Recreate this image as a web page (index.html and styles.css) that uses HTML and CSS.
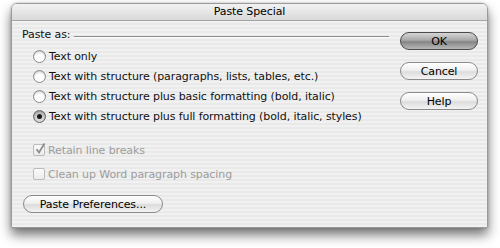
FILE: index.html
```html
<!DOCTYPE html>
<html>
<head>
<meta charset="utf-8">
<link rel="stylesheet" href="styles.css">
</head>
<body>
<div class="window">
  <div class="titlebar">Paste Special</div>
  <div class="content">
    <div class="main">
      <div class="group-head"><span class="label">Paste as:</span><span class="rule"></span></div>
      <div class="options">
        <div class="row"><span class="radio"></span><span>Text only</span></div>
        <div class="row"><span class="radio"></span><span>Text with structure (paragraphs, lists, tables, etc.)</span></div>
        <div class="row"><span class="radio"></span><span>Text with structure plus basic formatting (bold, italic)</span></div>
        <div class="row"><span class="radio on"></span><span>Text with structure plus full formatting (bold, italic, styles)</span></div>
      </div>
      <div class="checks">
        <div class="row dis"><span class="check on"><svg width="12" height="12" viewBox="0 0 12 12"><path d="M2.5 6.2 L5 9.5 L10.5 0.5" fill="none" stroke="#8c8c8c" stroke-width="1.8"/></svg></span><span>Retain line breaks</span></div>
        <div class="row dis"><span class="check"></span><span>Clean up Word paragraph spacing</span></div>
      </div>
      <div class="prefs"><span class="btn wide">Paste Preferences...</span></div>
    </div>
    <div class="side">
      <span class="btn default">OK</span>
      <span class="btn">Cancel</span>
      <span class="btn">Help</span>
    </div>
  </div>
</div>
</body>
</html>
```
FILE: styles.css
```css
html, body { margin: 0; padding: 0; background: #fff; }
body { font-family: "DejaVu Sans", "Lucida Grande", sans-serif; font-size: 11px; letter-spacing: -0.1px; color: #111; width: 500px; height: 248px; overflow: hidden; }
.window {
  margin: 3px 0 0 11px;
  width: 477px;
  height: 225px;
  box-sizing: border-box;
  border: 1px solid #9a9a9a;
  border-radius: 6px 6px 0 0;
  box-shadow: 0 7px 12px rgba(0,0,0,0.55), 0 0 3px rgba(0,0,0,0.2);
  overflow: hidden;
  display: flex; flex-direction: column;
}
.titlebar {
  height: 16px; line-height: 16px;
  text-align: center;
  background: linear-gradient(#f2f2f2, #d9d9d9);
  border-bottom: 1px solid #a5a5a5;
  font-size: 11px; color: #000;
}
.content {
  flex: 1;
  display: flex;
  background: repeating-linear-gradient(#f1f1f1 0 2px, #e9e9e9 2px 4px);
  padding: 0 9px 0 10px;
}
.main { flex: 1; display: flex; flex-direction: column; }
.group-head { display: flex; align-items: center; margin-top: 6px; height: 15px; }
.label { margin-right: 4px; }
.rule { flex: 1; height: 0; border-top: 1px solid #8c8c8c; border-bottom: 1px solid #fafafa; margin-top: 4px; margin-right: 11px; }
.options { margin-top: 7px; margin-left: 11px; display: flex; flex-direction: column; gap: 6px; }
.row { display: flex; align-items: center; height: 14px; gap: 3px; }
.radio {
  width: 13px; height: 13px; box-sizing: border-box; border-radius: 50%;
  border: 1px solid #8a8a8a;
  background: radial-gradient(circle at 50% 70%, #ffffff 0 40%, #e6e6e6 90%);
  box-shadow: inset 0 1px 1px rgba(0,0,0,0.15);
  display: flex; align-items: center; justify-content: center;
}
.radio.on { background: radial-gradient(circle at 50% 70%, #d8d8d8 0 30%, #9c9c9c 100%); border-color: #666; }
.radio.on::after { content: ""; width: 5px; height: 5px; border-radius: 50%; background: #1a1a1a; }
.checks { margin-top: 20px; margin-left: 11px; display: flex; flex-direction: column; gap: 10px; }
.dis { color: #9c9c9c; }
.check {
  width: 12px; height: 12px; box-sizing: border-box; border: 1px solid #bcbcbc; border-radius: 2px;
  background: linear-gradient(#fbfbfb, #ececec); position: relative;
}
.check svg { position: absolute; left: 0; top: -2px; }
.prefs { margin-top: 14px; }
.btn {
  display: flex; align-items: center; justify-content: center;
  height: 18px; box-sizing: border-box; border-radius: 9px;
  border: 1px solid #8a8a8a;
  background: linear-gradient(#ffffff 0%, #f0f0f0 45%, #dcdcdc 55%, #f4f4f4 100%);
  color: #000; font-size: 11px;
}
.btn.wide { width: 140px; margin-left: 1px; }
.side { width: 78px; display: flex; flex-direction: column; gap: 12px; padding-top: 11px; }
.btn.default {
  border-color: #4a4a4a;
  background: linear-gradient(#d6d6d6 0%, #a8a8a8 45%, #858585 55%, #b8b8b8 100%);
}
```
